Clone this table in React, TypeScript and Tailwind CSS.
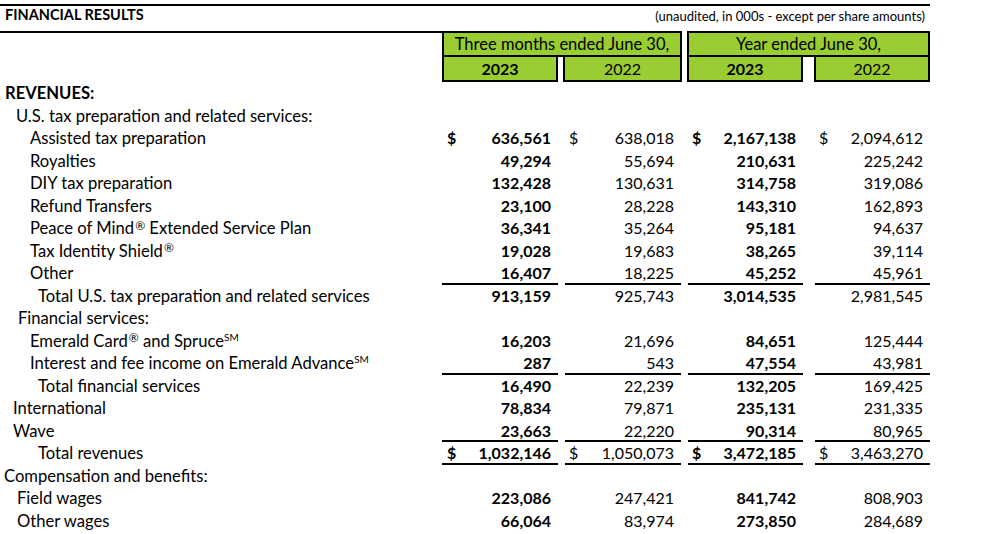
import React from "react";

type Row = {
  label: React.ReactNode;
  indent: number;
  bold?: boolean;
  vals?: string[];
  dollar?: boolean;
  line?: boolean;
};

const SM = () => <sup className="text-[10px] top-[-0.6em]">SM</sup>;
const R = () => <sup className="text-[12px] top-[-0.35em] ml-[1px]">®</sup>;

const rows: Row[] = [
  { label: "REVENUES:", indent: 5, bold: true },
  { label: "U.S. tax preparation and related services:", indent: 16 },
  { label: "Assisted tax preparation", indent: 30, vals: ["636,561", "638,018", "2,167,138", "2,094,612"], dollar: true },
  { label: "Royalties", indent: 30, vals: ["49,294", "55,694", "210,631", "225,242"] },
  { label: "DIY tax preparation", indent: 30, vals: ["132,428", "130,631", "314,758", "319,086"] },
  { label: "Refund Transfers", indent: 30, vals: ["23,100", "28,228", "143,310", "162,893"] },
  { label: <>Peace of Mind<R /> Extended Service Plan</>, indent: 30, vals: ["36,341", "35,264", "95,181", "94,637"] },
  { label: <>Tax Identity Shield<R /></>, indent: 30, vals: ["19,028", "19,683", "38,265", "39,114"] },
  { label: "Other", indent: 30, vals: ["16,407", "18,225", "45,252", "45,961"], line: true },
  { label: "Total U.S. tax preparation and related services", indent: 38, vals: ["913,159", "925,743", "3,014,535", "2,981,545"] },
  { label: "Financial services:", indent: 18 },
  { label: <>Emerald Card<R /> and Spruce<SM /></>, indent: 30, vals: ["16,203", "21,696", "84,651", "125,444"] },
  { label: <>Interest and fee income on Emerald Advance<SM /></>, indent: 30, vals: ["287", "543", "47,554", "43,981"], line: true },
  { label: "Total financial services", indent: 38, vals: ["16,490", "22,239", "132,205", "169,425"] },
  { label: "International", indent: 13, vals: ["78,834", "79,871", "235,131", "231,335"] },
  { label: "Wave", indent: 13, vals: ["23,663", "22,220", "90,314", "80,965"], line: true },
  { label: "Total revenues", indent: 38, vals: ["1,032,146", "1,050,073", "3,472,185", "3,463,270"], dollar: true, line: true },
  { label: "Compensation and benefits:", indent: 4 },
  { label: "Field wages", indent: 17, vals: ["223,086", "247,421", "841,742", "808,903"] },
  { label: "Other wages", indent: 17, vals: ["66,064", "83,974", "273,850", "284,689"] },
];

const colW = ["w-[116px]", "w-[116px]", "w-[115px]", "w-[115px]"];
const colMl = ["ml-0", "ml-[7px]", "ml-[7px]", "ml-[12px]"];
const colPl = ["pl-[5px]", "pl-[4px]", "pl-[4px]", "pl-[4px]"];

function NumCell({ i, value, dollar, line }: { i: number; value?: string; dollar?: boolean; line?: boolean }) {
  const bold = i % 2 === 0;
  return (
    <div
      className={`${colW[i]} ${colMl[i]} ${colPl[i]} pr-[7px] h-full flex justify-between text-[16px] ${
        line ? "border-b-2 border-black" : ""
      } ${bold ? "font-bold" : ""}`}
    >
      <span>{dollar ? "$" : ""}</span>
      <span className="tabular-nums">{value ?? ""}</span>
    </div>
  );
}

export default function App() {
  return (
    <div
      className="w-[1005px] h-[534px] bg-white text-black overflow-hidden"
      style={{ fontFamily: "Lato, 'Open Sans', sans-serif" }}
    >
      <div className="h-[4px]" />
      <div className="w-[930px] h-[2px] bg-black" />
      <div className="w-[930px] h-[25px] flex justify-between items-start">
        <div className="pl-[5px] text-[14.5px] font-bold leading-[18px]">FINANCIAL RESULTS</div>
        <div className="pr-[5px] text-[13px] leading-[20px]">(unaudited, in 000s - except per share amounts)</div>
      </div>
      {/* header */}
      <div className="flex h-[51px]">
        <div className="w-[442px] h-[2px] bg-black" />
        <div className="flex flex-col">
          <div className="flex">
            <div className="w-[240px] h-[26px] border-2 border-black bg-[#9ACD32] flex items-center justify-center text-[16.5px] leading-none">
              Three months ended June 30,
            </div>
            <div className="ml-[5px] w-[243px] h-[26px] border-2 border-black bg-[#9ACD32] flex items-center justify-center text-[16.5px] leading-none">
              Year ended June 30,
            </div>
          </div>
          <div className="flex -mt-[2px]">
            <div className="w-[116px] h-[27px] border-2 border-black bg-[#9ACD32] flex items-center justify-center text-[16px] font-bold leading-none">
              2023
            </div>
            <div className="ml-[5px] w-[119px] h-[27px] border-2 border-black bg-[#9ACD32] flex items-center justify-center text-[16px] leading-none">
              2022
            </div>
            <div className="ml-[5px] w-[116px] h-[27px] border-2 border-black bg-[#9ACD32] flex items-center justify-center text-[16px] font-bold leading-none">
              2023
            </div>
            <div className="ml-[11px] w-[116px] h-[27px] border-2 border-black bg-[#9ACD32] flex items-center justify-center text-[16px] leading-none">
              2022
            </div>
          </div>
        </div>
      </div>
      {/* rows */}
      <div className="leading-[22px]">
        {rows.map((r, idx) => (
          <div key={idx} className="flex h-[22.5px]">
            <div
              className={`w-[442px] whitespace-nowrap text-[16.6px] ${r.bold ? "font-bold" : ""}`}
              style={{ paddingLeft: r.indent }}
            >
              {r.label}
            </div>
            {r.vals
              ? r.vals.map((v, i) => (
                  <NumCell key={i} i={i} value={v} dollar={r.dollar} line={r.line} />
                ))
              : null}
          </div>
        ))}
      </div>
    </div>
  );
}
